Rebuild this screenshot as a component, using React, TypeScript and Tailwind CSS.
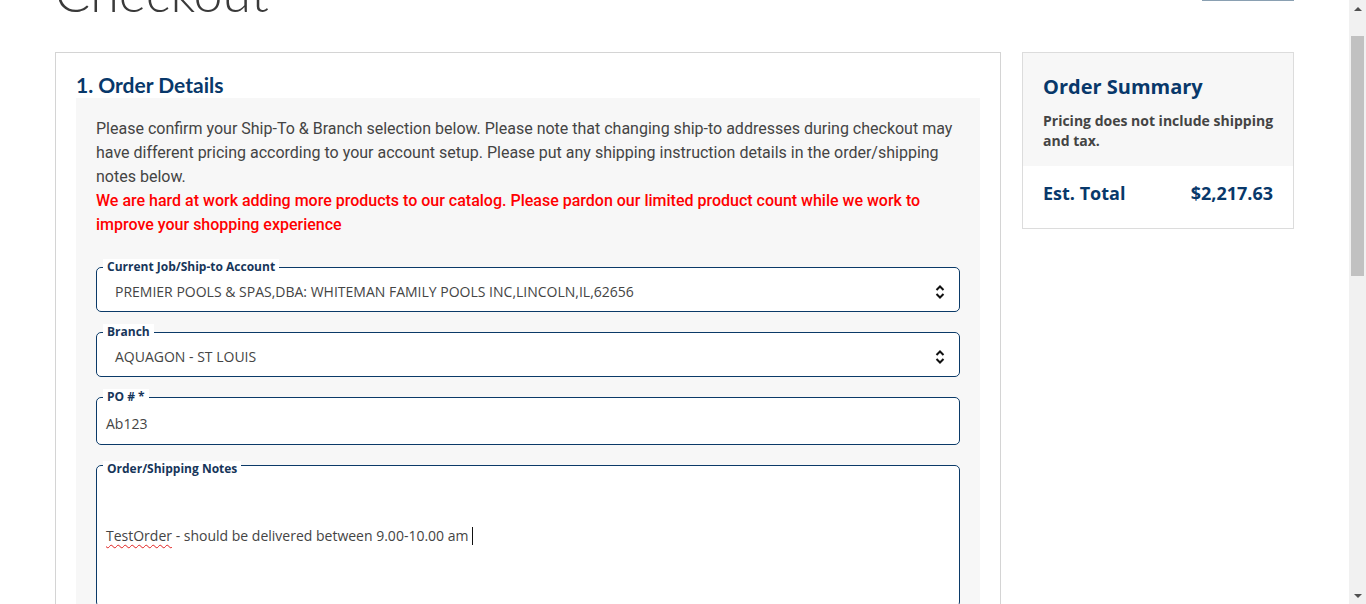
import { ReactNode } from "react";

const navy = "text-[#08386a]";

function UpDown() {
  return (
    <svg width="12" height="20" viewBox="0 0 12 20" className="shrink-0">
      <path d="M2.5 8 L6 4.5 L9.5 8" fill="none" stroke="#111" strokeWidth="2" />
      <path d="M2.5 12 L6 15.5 L9.5 12" fill="none" stroke="#111" strokeWidth="2" />
    </svg>
  );
}

function Field({
  label,
  children,
  className = "",
  legendClass = "",
}: {
  label: string;
  children: ReactNode;
  className?: string;
  legendClass?: string;
}) {
  return (
    <fieldset className={`border border-[#0b3a68] rounded-[5px] bg-white px-[6px] ${className}`}>
      <legend className={`px-[4px] bg-white text-[12px] leading-[16px] font-bold text-[#17365a] ${legendClass}`}>{label}</legend>
      {children}
    </fieldset>
  );
}

export default function App() {
  return (
    <div className="flex h-[604px] overflow-hidden bg-white" style={{ fontFamily: "'Open Sans', sans-serif" }}>
      <div className="flex-1 px-[55px]">
        {/* Page header, scrolled partly out of view */}
        <div className="flex justify-between items-start -mt-[34px]">
          <h1 className="text-[52px] leading-none font-light text-[#3a3a3a]" style={{ fontFamily: "Lato, sans-serif" }}>
            Checkout
          </h1>
          <div className="mt-[32px] w-[92px] border-b-2 border-[#8aa0b2] h-[3px]" />
        </div>

        <div className="flex gap-[21px] mt-[34px] items-start">
          {/* Left: order details */}
          <div className="flex-1 border border-[#d4d4d4] px-[20px] pt-[19px] h-[600px]">
            <h2 className={`text-[21px] leading-[26px] font-bold ${navy}`} style={{ fontFamily: "Lato, sans-serif" }}>
              1. Order Details
            </h2>
            <div className="bg-[#f7f7f7] px-[20px] pt-[19px] pb-10 h-[560px]">
              <div className="text-[16px] leading-[24px] text-[#444]" style={{ fontFamily: "Roboto, sans-serif" }}>
                <p>
                  Please confirm your Ship-To &amp; Branch selection below. Please note that changing ship-to addresses during checkout may have different pricing according to your account setup. Please put any shipping instruction details in the order/shipping notes below.
                </p>
                <p className="text-[#ff0000] font-medium">
                  We are hard at work adding more products to our catalog. Please pardon our limited product count while we work to improve your shopping experience
                </p>
              </div>

              <div className="flex flex-col gap-[12px] mt-[22px]">
                <Field label="Current Job/Ship-to Account">
                  <div className="flex items-center justify-between h-[39px] pl-[12px] pr-[7px] -mt-[3px]">
                    <span className="text-[14px] text-[#444]">PREMIER POOLS &amp; SPAS,DBA: WHITEMAN FAMILY POOLS INC,LINCOLN,IL,62656</span>
                    <UpDown />
                  </div>
                </Field>
                <Field label="Branch">
                  <div className="flex items-center justify-between h-[39px] pl-[12px] pr-[7px] -mt-[3px]">
                    <span className="text-[14px] text-[#444]">AQUAGON - ST LOUIS</span>
                    <UpDown />
                  </div>
                </Field>
                <Field label="PO # *">
                  <div className="flex items-center h-[42px] pl-[3px] -mt-[3px]">
                    <span className="text-[14px] text-[#444]">Ab123</span>
                  </div>
                </Field>
                <Field label="Order/Shipping Notes" className="h-[150px]" legendClass="translate-y-[4px]">
                  <div className="pt-[52px] pl-[3px] text-[14px] text-[#444] flex items-center">
                    <span className="underline decoration-wavy decoration-[#e02020] decoration-1 underline-offset-[3px]">TestOrder</span>
                    <span>&nbsp;- should be delivered between 9.00-10.00 am&nbsp;</span>
                    <span className="inline-block w-px h-[18px] bg-[#111]" />
                  </div>
                </Field>
              </div>
            </div>
          </div>

          {/* Right: summary */}
          <div className="w-[272px] border border-[#dcdcdc]">
            <div className="bg-[#f7f7f7] pl-[20px] pr-[14px] pt-[20px] pb-[15px]">
              <h3 className={`text-[20px] leading-[28px] font-bold ${navy}`}>Order Summary</h3>
              <p className="mt-[10px] text-[14px] leading-[20px] font-bold text-[#444]">
                Pricing does not include shipping and tax.
              </p>
            </div>
            <div className={`flex justify-between items-center px-[20px] pt-[15px] pb-[23px] text-[18px] leading-[24px] font-bold ${navy}`}>
              <span>Est. Total</span>
              <span>$2,217.63</span>
            </div>
          </div>
        </div>
      </div>

      {/* Scrollbar */}
      <div className="w-[17px] bg-[#f1f1f1] flex flex-col items-center">
        <div className="h-[17px] flex items-center justify-center">
          <div className="w-0 h-0 border-l-[4px] border-r-[4px] border-b-[4px] border-l-transparent border-r-transparent border-b-[#505050]" />
        </div>
        <div className="mt-[19px] w-[13px] h-[240px] bg-[#c1c1c1]" />
        <div className="flex-1" />
        <div className="h-[17px] flex items-center justify-center">
          <div className="w-0 h-0 border-l-[4px] border-r-[4px] border-t-[4px] border-l-transparent border-r-transparent border-t-[#505050]" />
        </div>
      </div>
    </div>
  );
}
